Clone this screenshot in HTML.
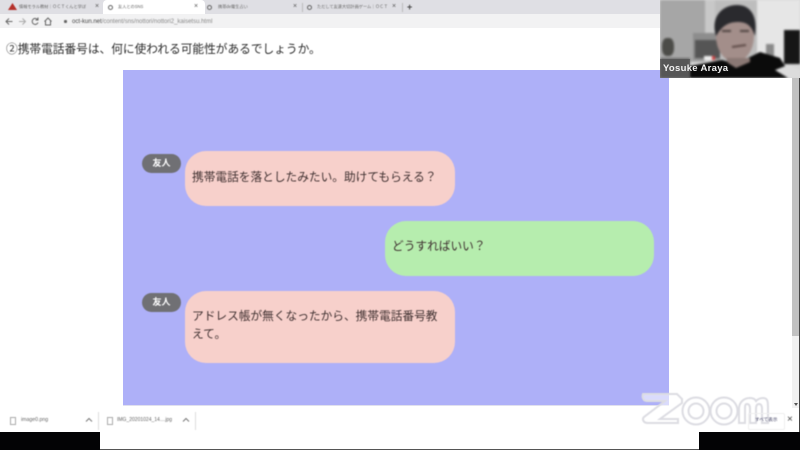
<!DOCTYPE html>
<html lang="ja"><head><meta charset="utf-8"><style>
html,body{margin:0;padding:0;width:800px;height:450px;overflow:hidden;background:#fff;font-family:"Liberation Sans","Noto Sans CJK JP",sans-serif}
.a{position:absolute}
.t{white-space:nowrap;color:#666;font-size:5px;line-height:8px}
.x{font-size:7px;color:#555}
.g{width:3px;height:3px;border:1.5px solid #666;border-radius:50%}
.b{position:absolute;border-radius:21px;font-size:11.7px;line-height:18px;color:#3f3030;box-sizing:border-box;padding:0 0 0 7px}
.p{background:#f7d0cb;left:185px;width:270px}
.l{position:absolute;left:142px;width:39px;height:19px;border-radius:10px;background:#707074;color:#fff;font-size:9px;line-height:18px;text-align:center;font-weight:bold}
.blur{filter:blur(.4px)}
</style></head><body>
<div class="a" style="left:0;top:0;width:800px;height:14px;background:#dfdfe4"></div>
<div class="a" style="left:103px;top:0;width:102px;height:14px;background:#fff;border-radius:4px 4px 0 0"></div>
<div class="a" style="left:0;top:14px;width:660px;height:14px;background:#f2f2f3"></div>
<div class="blur">
<svg class="a" style="left:8px;top:3px" width="9" height="8"><path d="M4.500 0L9 7H0z" fill="#b5312b"/></svg>
<div class="a t" style="left:19px;top:3px;font-size:4.200px">情報モラル教材｜ＯＣＴくんと学ぼ</div>
<div class="a t x" style="left:95px;top:3px">×</div>
<div class="a g" style="left:108px;top:5px"></div>
<div class="a t" style="left:118px;top:3px;font-size:4.200px">友人とのSNS</div>
<div class="a t x" style="left:194px;top:3px">×</div>
<div class="a g" style="left:207px;top:5px"></div>
<div class="a t" style="left:218px;top:3px;font-size:4.200px">携帯de電生占い</div>
<div class="a t x" style="left:293px;top:3px">×</div>
<div class="a" style="left:302px;top:3px;width:1px;height:9px;background:#bbb"></div>
<div class="a g" style="left:307px;top:5px"></div>
<div class="a t" style="left:317px;top:3px;font-size:4.200px">ただして友達大切計画ゲーム｜ＯＣＴ</div>
<div class="a t x" style="left:392px;top:3px">×</div>
<div class="a" style="left:402px;top:3px;width:1px;height:9px;background:#bbb"></div>
<div class="a t" style="left:407px;top:2px;font-size:9px;line-height:10px;color:#444;font-weight:bold">+</div>
<svg class="a" style="left:5px;top:16px" width="52" height="11" fill="none" stroke="#666" stroke-width="1">
<path d="M7.500 5.500H1M4 2.500L1 5.500L4 8.500"/><path d="M20.500 5.500H14M17.500 2.500L20.500 5.500L17.500 8.500" stroke="#aaa"/>
<path d="M32.500 3.500A3 3 0 1 0 33 6.500M33 1.500V4H30.500"/><path d="M39.500 5.500L43 2L46.500 5.500M40.500 5V9H45.500V5"/></svg>
<div class="a" style="left:64px;top:20px;width:3px;height:3px;background:#666;border-radius:1px"></div>
<div class="a t" style="left:72px;top:18px;font-size:6px;color:#888"><span style="color:#444">oct-kun.net</span>/content/sns/nottori/nottori2_kaisetsu.html</div>
<div class="a" style="left:6px;top:40px;font-size:11.700px;line-height:20px;color:#2b2b2b;white-space:nowrap">②携帯電話番号は、何に使われる可能性があるでしょうか。</div>
</div>
<div class="a" style="left:123px;top:70px;width:546px;height:336px;background:#aeb0f8"></div>
<div class="blur">
<div class="l" style="top:154px">友人</div>
<div class="b p" style="top:151px;height:55px;padding-top:18px">携帯電話を落としたみたい。助けてもらえる？</div>
<div class="b" style="left:385px;top:221px;width:269px;height:55px;padding-top:17px;background:#b6edae">どうすればいい？</div>
<div class="l" style="top:293px">友人</div>
<div class="b p" style="top:291px;height:72px;padding:17px 15px 0 7px">アドレス帳が無くなったから、携帯電話番号教えて。</div>
</div>
<div class="a" style="left:792px;top:78px;width:7px;height:334px;background:#f1f1f1"></div>
<div class="a" style="left:792px;top:78px;width:7px;height:258px;background:#c1c1c1"></div>
<div class="a" style="left:799px;top:78px;width:1px;height:354px;background:#444"></div>
<div class="a" style="left:794px;top:403px;width:0;height:0;border:2px solid transparent;border-top:3px solid #555"></div>
<div class="a" style="left:0;top:408px;width:799px;height:24px;background:#fff"></div>
<div class="a" style="left:123px;top:405px;width:546px;height:1px;background:#e0e0ee"></div>
<div class="blur">
<div class="a" style="left:10px;top:417px;width:4px;height:6px;border:1px solid #aaa"></div>
<div class="a t" style="left:21px;top:416px;font-size:5.200px">image0.png</div>
<svg class="a" style="left:85px;top:417px" width="8" height="6" fill="none" stroke="#777"><path d="M1 4.500L4 1.500L7 4.500"/></svg>
<div class="a" style="left:98px;top:412px;width:1px;height:18px;background:#ddd"></div>
<div class="a" style="left:107px;top:417px;width:4px;height:6px;border:1px solid #aaa"></div>
<div class="a t" style="left:117px;top:416px">IMG_20201024_14....jpg</div>
<svg class="a" style="left:182px;top:417px" width="8" height="6" fill="none" stroke="#777"><path d="M1 4.500L4 1.500L7 4.500"/></svg>
<div class="a" style="left:195px;top:412px;width:1px;height:18px;background:#ddd"></div>
</div>
<svg class="a blur" style="left:640px;top:392px" width="135" height="36" fill="none" stroke="#dcdce2" stroke-width="2">
<path d="M3 2H37L42 7V11L20 27H38V31H8C3 31 2 27 4 25L25 9H7C3 9 2 5 3 2Z" fill="#fff" fill-opacity=".55"/>
<circle cx="56" cy="19" r="13.500" fill="#fff" fill-opacity=".5"/><circle cx="56" cy="19" r="7.500"/>
<circle cx="84" cy="19" r="13.500" fill="#fff" fill-opacity=".5"/><circle cx="84" cy="19" r="7.500"/>
<path d="M99 31V17C99 10 104 6 110 6C113 6 115 7 116 9C118 7 120 6 123 6C128 6 128 10 128 17V31H122V17C122 14 121 12 119 12C117 12 116 14 116 17V31H110V17C110 14 109 12 107 12C105 12 105 14 105 17V31Z"/>
</svg>
<div class="blur">
<div class="a" style="left:748px;top:413px;width:35px;height:15px;border:1px solid #eee;border-radius:2px"></div>
<div class="a t" style="left:755px;top:416px;font-size:4.600px;color:#446">すべて表示</div>
<div class="a t" style="left:787px;top:415px;font-size:10px;line-height:10px;color:#444">×</div>
</div>
<div class="a" style="left:0;top:432px;width:100px;height:18px;background:#030305"></div>
<div class="a" style="left:699px;top:432px;width:101px;height:18px;background:#030305"></div>
<div class="a" style="left:100px;top:449px;width:599px;height:1px;background:#555"></div>
<div class="a" style="left:660px;top:0;width:140px;height:78px;overflow:hidden;background:#d8d8d8">
<div style="position:absolute;inset:0;filter:blur(1px)">
<div class="a" style="left:0;top:0;width:45px;height:62px;background:#a6a6a6"></div>
<div class="a" style="left:45px;top:0;width:10px;height:62px;background:#c8c8c8"></div>
<div class="a" style="left:55px;top:0;width:42px;height:62px;background:#bdbdbd"></div>
<div class="a" style="left:97px;top:0;width:43px;height:62px;background:#e6e6e6"></div>
<div class="a" style="left:0;top:58px;width:30px;height:20px;background:#6b6b6b"></div>
<div class="a" style="left:33px;top:33px;width:27px;height:27px;background:#8d8d8d"></div>
<div class="a" style="left:35px;top:40px;width:25px;height:18px;background:#555"></div>
<div class="a" style="left:2px;top:38px;width:12px;height:18px;background:#4c4c48;border-radius:40%"></div>
<div class="a" style="left:124px;top:30px;width:16px;height:34px;background:#161616"></div>
<div class="a" style="left:106px;top:44px;width:8px;height:12px;background:#8a8a8a"></div>
<svg class="a" style="left:0;top:0" width="140" height="78">
<path d="M30 78V66L62 60L75 64L92 56L100 52L120 58L125 66L140 72V78Z" fill="#0b0b0b"/>
<path d="M115 70L128 65L140 70V78H128Z" fill="#dcdcdc"/>
<ellipse cx="75" cy="36" rx="19" ry="26" fill="#a38e8a"/>
<path d="M56 36C50 16 63 5 77 5C90 5 98 15 95 36C92 27 88 22 78 22C68 22 62 26 56 36Z" fill="#2a2a2e"/>
<path d="M66 58H90V62L76 68L68 63Z" fill="#8a7874"/>
<path d="M72 47L86 45" stroke="#5d4a46" stroke-width="2"/>
<path d="M62 31H71M80 31H89" stroke="#4d4240" stroke-width="2"/>
<rect x="44" y="56" width="8" height="4" fill="#eee"/><rect x="52" y="56" width="3" height="4" fill="#c44"/>
</svg>
</div>
<div class="a" style="left:0;top:59px;width:30px;height:19px;background:rgba(70,70,70,.55)"></div>
<div class="a" style="left:3px;top:62px;color:#f2f2f2;font-size:9.500px;line-height:14px;font-weight:bold;letter-spacing:.3px;white-space:nowrap">Yosuke Araya</div>
</div>
</body></html>
